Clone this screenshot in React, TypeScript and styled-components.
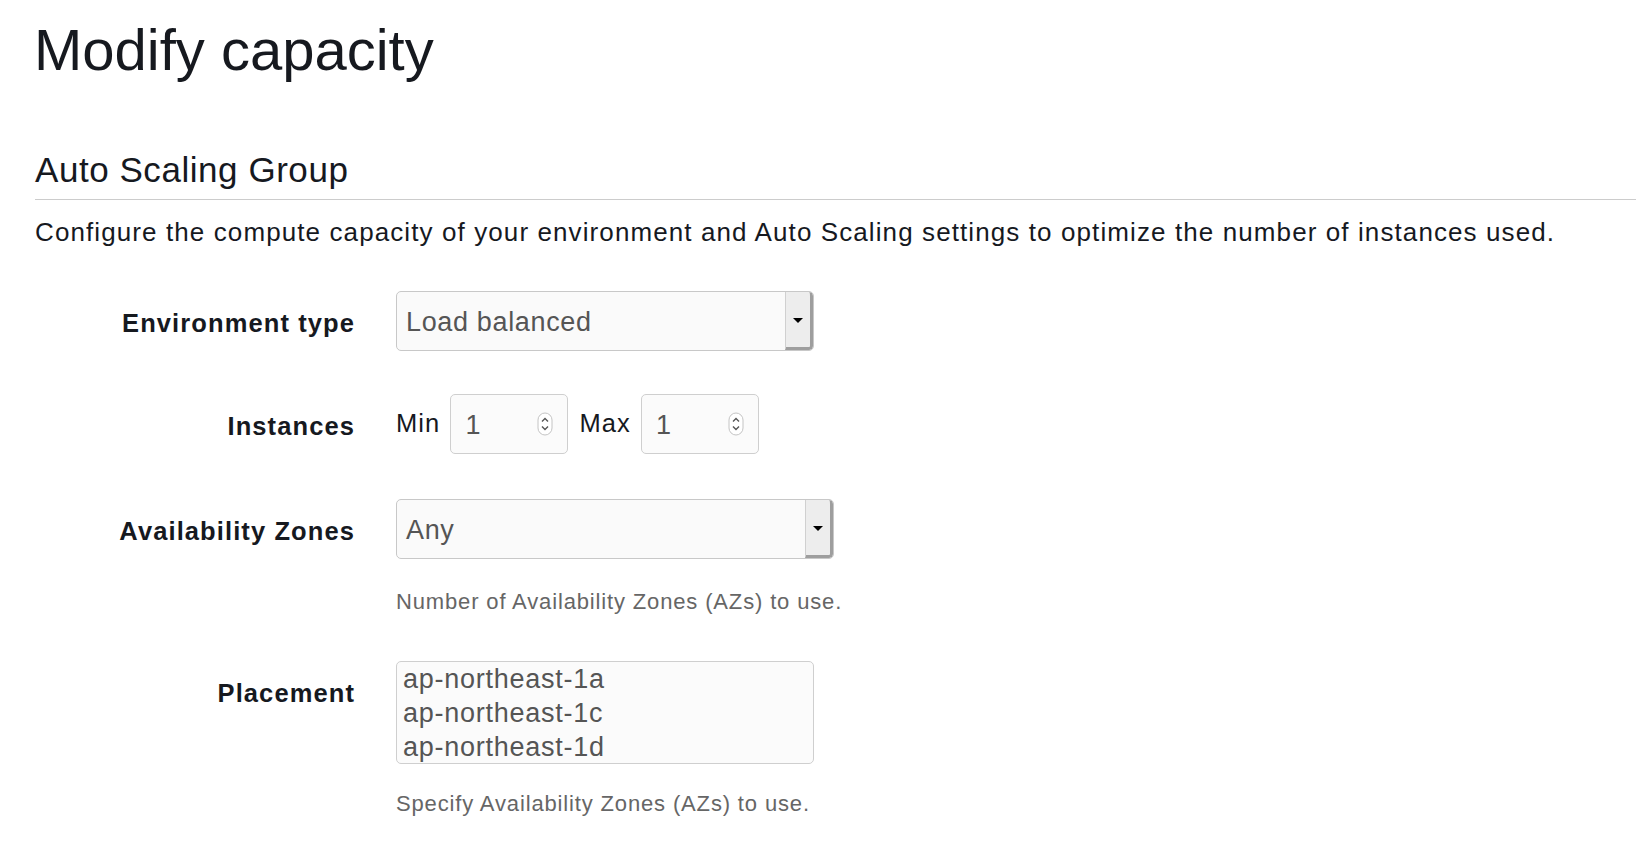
import styled, { createGlobalStyle } from 'styled-components'

const GlobalStyle = createGlobalStyle`
  html, body {
    margin: 0;
    padding: 0;
    background: #ffffff;
  }
  body {
    font-family: "Liberation Sans", Arial, Helvetica, sans-serif;
    color: #16191f;
  }
`

const Page = styled.div`
  padding: 15px 0 0 35px;
`

const Title = styled.h1`
  margin: 0 0 0 -1px;
  font-size: 58px;
  font-weight: 400;
  line-height: 1.2;
  color: #16191f;
`

const SectionHeader = styled.h2`
  margin: 64px 0 0;
  padding-bottom: 8px;
  font-size: 35px;
  font-weight: 400;
  line-height: 1.2;
  letter-spacing: 0.55px;
  color: #16191f;
  border-bottom: 1px solid #cccccc;
`

const Description = styled.p`
  margin: 15px 0 42px;
  font-size: 26px;
  line-height: 34.3px;
  letter-spacing: 1.1px;
`

const Row = styled.div<{ $space: number }>`
  display: flex;
  align-items: flex-start;
  margin-bottom: ${(p) => p.$space}px;
`

const Label = styled.div`
  width: 320px;
  flex-shrink: 0;
  padding-top: 15px;
  margin-right: 41px;
  text-align: right;
  font-size: 25.5px;
  line-height: 34.3px;
  font-weight: 700;
  letter-spacing: 1.1px;
`

const Control = styled.div`
  display: flex;
  flex-direction: column;
`

const SelectBox = styled.div<{ $width: number }>`
  width: ${(p) => p.$width}px;
  height: 60px;
  box-sizing: border-box;
  display: flex;
  border: 1px solid #c8c8c8;
  border-radius: 5px;
  background: #fafafa;
  overflow: hidden;
`

const SelectValue = styled.div`
  flex: 1;
  display: flex;
  align-items: center;
  padding: 4px 0 0 9px;
  font-size: 27px;
  line-height: 27px;
  letter-spacing: 0.65px;
  color: #555555;
`

const ArrowButton = styled.div`
  width: 28px;
  box-sizing: border-box;
  display: flex;
  align-items: center;
  justify-content: center;
  background: #ededed;
  border-left: 1px solid #d0d0d0;
  border-right: 3px solid #9e9e9e;
  border-bottom: 3px solid #9e9e9e;
  border-radius: 0 4px 4px 0;

  &::after {
    content: '';
    width: 0;
    height: 0;
    border-left: 5px solid transparent;
    border-right: 5px solid transparent;
    border-top: 5px solid #000000;
    margin-top: 2px;
  }
`

const RangeGroup = styled.div`
  display: flex;
  align-items: flex-start;
`

const RangeLabel = styled.span`
  margin: 12px 10px 0 0;
  font-size: 25.5px;
  line-height: 34.3px;
  letter-spacing: 1.1px;
`

const NumberBox = styled.div`
  width: 118px;
  height: 60px;
  box-sizing: border-box;
  display: flex;
  align-items: center;
  justify-content: space-between;
  padding: 4px 14px 0 14px;
  margin-right: 11px;
  border: 1px solid #cfcfcf;
  border-radius: 5px;
  background: #fbfbfb;
  font-size: 27px;
  line-height: 27px;
  color: #555555;

  svg {
    margin-top: -4px;
  }
`

const ListBox = styled.div`
  width: 418px;
  height: 103px;
  box-sizing: border-box;
  padding: 0 6px;
  border: 1px solid #cfcfcf;
  border-radius: 5px;
  background: #fbfbfb;
  font-size: 27px;
  line-height: 34px;
  letter-spacing: 0.75px;
  color: #555555;
`

const HelpText = styled.div<{ $top: number; $bottom: number }>`
  margin: ${(p) => p.$top}px 0 ${(p) => p.$bottom}px;
  font-size: 22px;
  line-height: 30px;
  letter-spacing: 0.85px;
  color: #666666;
`

function Spinner() {
  return (
    <svg width="16" height="24" viewBox="0 0 16 24">
      <rect x="1" y="1" width="14" height="22" rx="7" fill="#ffffff" stroke="#c4c4c4" />
      <path d="M5 9.5 L8 6.5 L11 9.5" fill="none" stroke="#555555" strokeWidth="1.4" />
      <path d="M5 14.5 L8 17.5 L11 14.5" fill="none" stroke="#555555" strokeWidth="1.4" />
    </svg>
  )
}

function Select({ value, width }: { value: string; width: number }) {
  return (
    <SelectBox $width={width}>
      <SelectValue>{value}</SelectValue>
      <ArrowButton />
    </SelectBox>
  )
}

function NumberInput({ value }: { value: string }) {
  return (
    <NumberBox>
      <span>{value}</span>
      <Spinner />
    </NumberBox>
  )
}

const zones = ['ap-northeast-1a', 'ap-northeast-1c', 'ap-northeast-1d']

export default function App() {
  return (
    <>
      <GlobalStyle />
      <Page>
        <Title>Modify capacity</Title>
        <SectionHeader>Auto Scaling Group</SectionHeader>
        <Description>
          Configure the compute capacity of your environment and Auto Scaling settings to optimize the
          number of instances used.
        </Description>

        <Row $space={43}>
          <Label>Environment type</Label>
          <Control>
            <Select value="Load balanced" width={418} />
          </Control>
        </Row>

        <Row $space={45}>
          <Label>Instances</Label>
          <RangeGroup>
            <RangeLabel>Min</RangeLabel>
            <NumberInput value="1" />
            <RangeLabel>Max</RangeLabel>
            <NumberInput value="1" />
          </RangeGroup>
        </Row>

        <Row $space={0}>
          <Label>Availability Zones</Label>
          <Control>
            <Select value="Any" width={438} />
            <HelpText $top={28} $bottom={44}>
              Number of Availability Zones (AZs) to use.
            </HelpText>
          </Control>
        </Row>

        <Row $space={0}>
          <Label>Placement</Label>
          <Control>
            <ListBox>
              {zones.map((z) => (
                <div key={z}>{z}</div>
              ))}
            </ListBox>
            <HelpText $top={25} $bottom={0}>
              Specify Availability Zones (AZs) to use.
            </HelpText>
          </Control>
        </Row>
      </Page>
    </>
  )
}
